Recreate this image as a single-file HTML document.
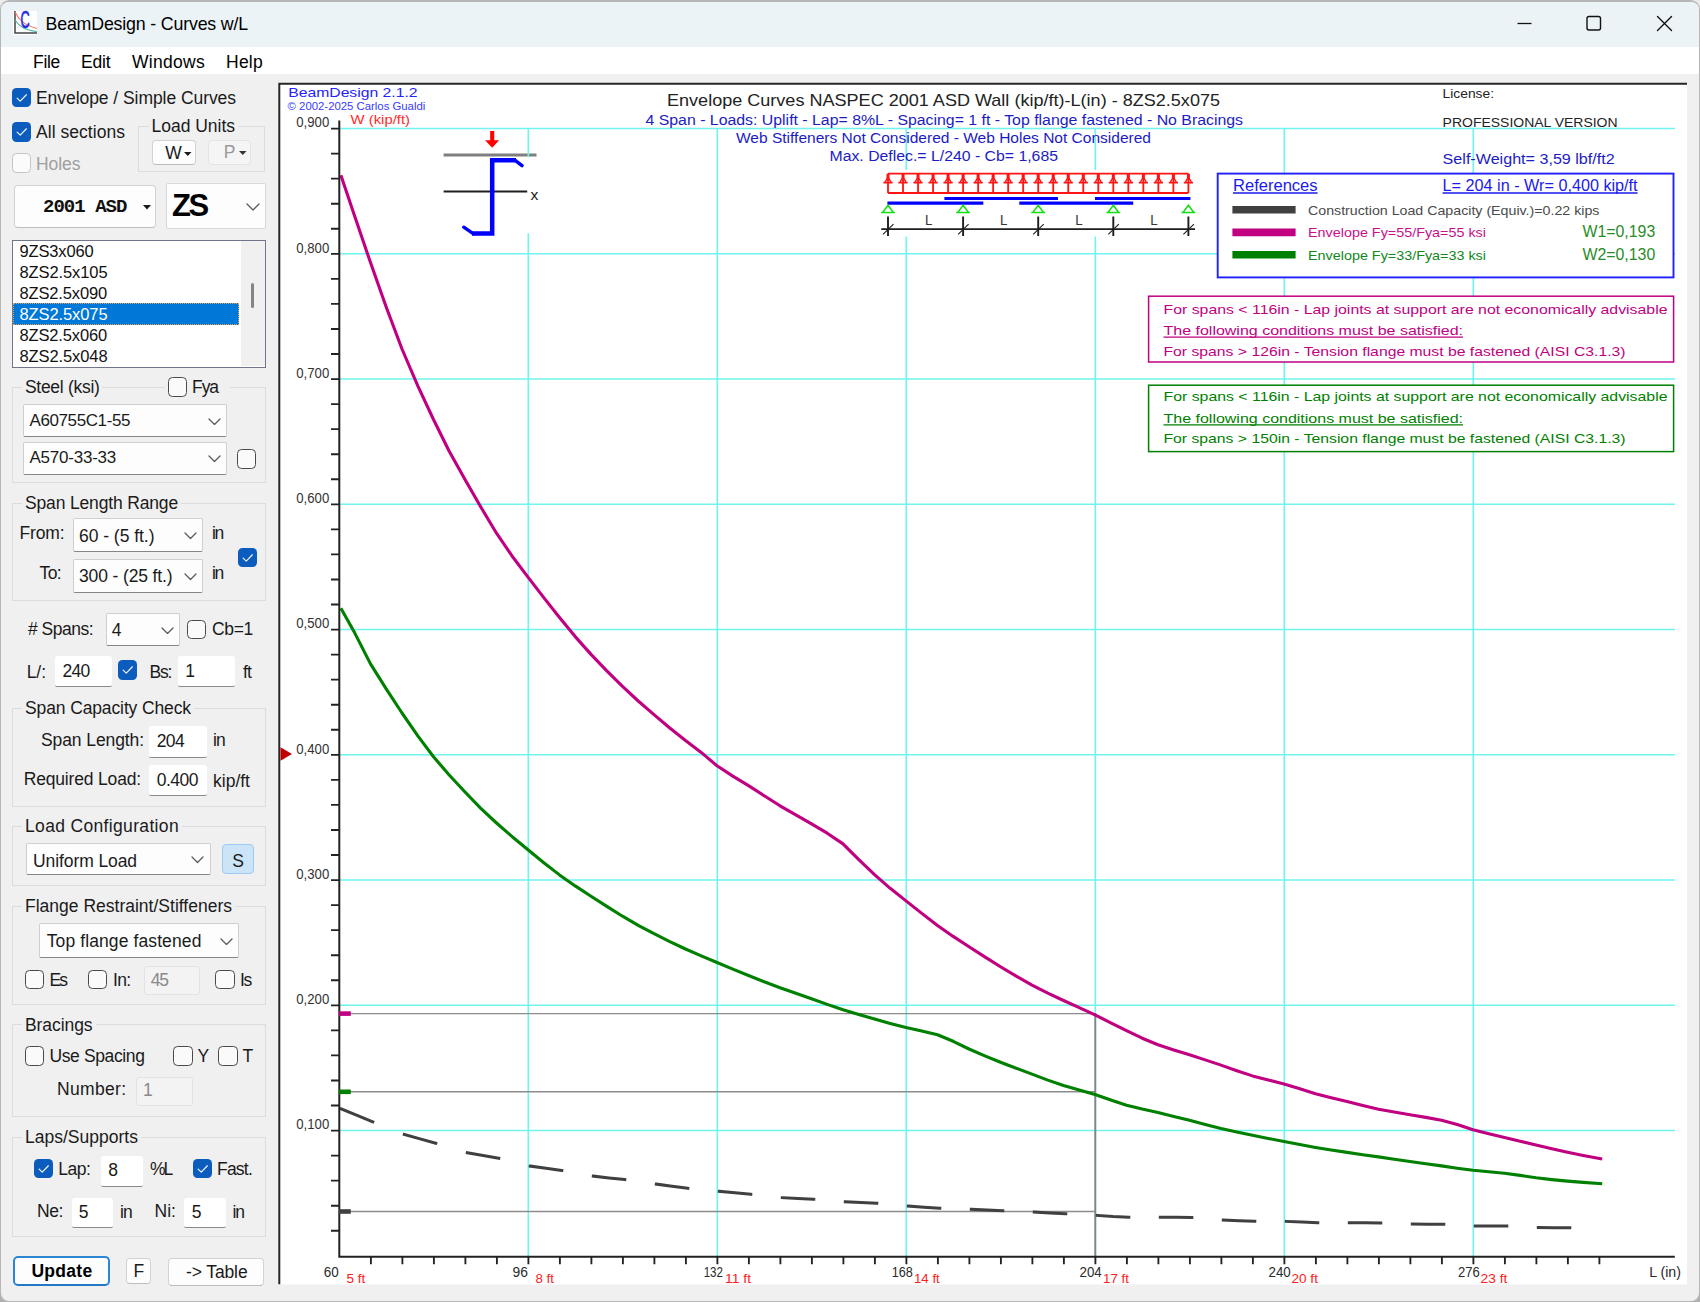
<!DOCTYPE html>
<html lang="en"><head><meta charset="utf-8"><title>BeamDesign - Curves w/L</title>
<style>
html,body{margin:0;padding:0;}
body{width:1700px;height:1302px;overflow:hidden;background:#ebebeb;font-family:"Liberation Sans",sans-serif;position:relative;}
#win{position:absolute;left:0;top:0;width:1700px;height:1302px;overflow:hidden;}
#frame{position:absolute;left:0;top:0;width:1700px;height:1302px;border-radius:9.5px;background:#b6b6b6;}
#winbg{left:1px;top:1.6px;width:1698px;height:1299.1px;background:#f0f0f0;border-radius:8px;overflow:hidden;}
#winbg > div{position:absolute;}
#win > div, #win > svg, #win > span{position:absolute;}
#titlebar{left:0;top:0;width:1700px;height:45px;background:#ecf3f6;}
#menubar{left:0;top:45px;width:1700px;height:27.8px;background:#fff;}
.t{position:absolute;white-space:pre;}
#chart{left:278px;top:82px;}
</style></head><body>
<div id="win">
<div style="position:absolute;left:0;top:1290px;width:1700px;height:12px;background:#b2b2b2"></div><div id="frame"></div>
<div id="winbg"><div id="titlebar"></div><div id="menubar"></div></div>
<svg id="appicon" style="left:12px;top:10px" width="26" height="26" viewBox="0 0 26 26">
<rect x="1" y="1" width="24" height="24" fill="#fff"/>
<path d="M3 1 V23 H25" fill="none" stroke="#444" stroke-width="1.5"/>
<path d="M3 2 C7 10 12 15 25 18.5" fill="none" stroke="#f07860" stroke-width="1.1"/>
<path d="M3 10 C7 16 12 20 25 21.5" fill="none" stroke="#50b8a0" stroke-width="1.1"/>
<text x="8.5" y="17.9" font-family="Liberation Sans, sans-serif" font-size="23" fill="#2a2ae0" stroke="#2a2ae0" stroke-width="0.7" textLength="9.2" lengthAdjust="spacingAndGlyphs">C</text>
</svg>
<svg id="winbtns" style="left:1500px;top:0" width="200" height="46" viewBox="0 0 200 46">
<path d="M17.5 23.5 H31.5" stroke="#111" stroke-width="1.3" fill="none"/>
<rect x="87" y="16.5" width="13.5" height="13.5" rx="2" fill="none" stroke="#111" stroke-width="1.4"/>
<path d="M157.5 16.5 L171.5 30.5 M171.5 16.5 L157.5 30.5" stroke="#111" stroke-width="1.4" fill="none" stroke-linecap="round"/>
</svg>
<div style="left:11.6px;top:87.6px;width:19.5px;height:19.5px;background:#0b5cbd;border-radius:4.5px;"><svg viewBox="0 0 19 19" width="100%" height="100%"><path d="M5 9.8 L8 12.8 L14 6.6" fill="none" stroke="#f2f6fc" stroke-width="1.15" stroke-linecap="round" stroke-linejoin="round"/></svg></div>
<div style="left:11.6px;top:122.1px;width:19.5px;height:19.5px;background:#0b5cbd;border-radius:4.5px;"><svg viewBox="0 0 19 19" width="100%" height="100%"><path d="M5 9.8 L8 12.8 L14 6.6" fill="none" stroke="#f2f6fc" stroke-width="1.15" stroke-linecap="round" stroke-linejoin="round"/></svg></div>
<div style="left:11.6px;top:153.3px;width:19.5px;height:19.5px;background:#fbfbfb;border:1.3px solid #c4c4c4;border-radius:4.5px;box-sizing:border-box;"></div>
<div style="left:138px;top:126px;width:126.5px;height:46px;border:1px solid #dcdcdc;box-sizing:border-box;"></div>
<div style="left:149px;top:118px;width:89px;height:16px;background:#f0f0f0;"></div>
<div style="left:151.5px;top:140px;width:44.5px;height:24.5px;background:#fdfdfd;border:1px solid #d2d2d2;border-bottom-color:#bdbdbd;box-sizing:border-box;border-radius:4px;"></div>
<svg style="left:184.25px;top:151.5px" width="7.5" height="4" viewBox="0 0 7.5 4"><path d="M0 0 L7.5 0 L3.75 4 Z" fill="#1a1a1a"/></svg>
<div style="left:207.5px;top:140px;width:43.5px;height:24.5px;background:#fdfdfd;border:1px solid #d2d2d2;border-bottom-color:#bdbdbd;box-sizing:border-box;border-radius:4px;background:#f5f5f5;border-color:#e4e4e4;"></div>
<svg style="left:239.25px;top:150.5px" width="7.5" height="4" viewBox="0 0 7.5 4"><path d="M0 0 L7.5 0 L3.75 4 Z" fill="#333"/></svg>
<div style="left:13.7px;top:185px;width:142.3px;height:42.5px;background:#fdfdfd;border:1px solid #d2d2d2;border-bottom-color:#bdbdbd;box-sizing:border-box;border-radius:4px;"></div>
<svg style="left:143px;top:205.25px" width="8" height="4.5" viewBox="0 0 8 4.5"><path d="M0 0 L8 0 L4 4.5 Z" fill="#1a1a1a"/></svg>
<div style="left:166px;top:183px;width:100px;height:46px;background:#fdfdfd;border:1px solid #d9d9d9;box-sizing:border-box;border-radius:2px;"></div>
<svg style="left:246px;top:203px" width="14" height="8" viewBox="-1 -1 14 8"><path d="M0 0 L6 6 L12 0" fill="none" stroke="#5a5a5a" stroke-width="1.3" stroke-linecap="round" stroke-linejoin="round"/></svg>
<div style="left:12px;top:239.6px;width:254px;height:128px;background:#fff;border:1.7px solid #70758a;box-sizing:border-box;"></div>
<div style="left:240.5px;top:241px;width:24px;height:124.5px;background:#f0f0f0;"></div>
<div style="left:251.3px;top:282.5px;width:3px;height:25px;background:#858585;border-radius:1.5px;"></div>
<div style="left:13.2px;top:303.3px;width:226.3px;height:21.6px;background:#0078d7;outline:1px dotted #e0a060;outline-offset:-1px;"></div>
<div style="left:12px;top:387px;width:253.7px;height:95.5px;border:1px solid #dcdcdc;box-sizing:border-box;"></div>
<div style="left:22px;top:379px;width:80px;height:16px;background:#f0f0f0;"></div>
<div style="left:165px;top:379px;width:65px;height:16px;background:#f0f0f0;"></div>
<div style="left:167.6px;top:377.1px;width:19.5px;height:19.5px;background:#fafafa;border:1.4px solid #4a4a4a;border-radius:4.5px;box-sizing:border-box;"></div>
<div style="left:23.1px;top:404px;width:204.4px;height:32.7px;background:#fdfdfd;border:1px solid #cfcfcf;border-bottom:1.4px solid #868686;box-sizing:border-box;border-radius:2px;"></div>
<svg style="left:207.5px;top:417.5px" width="13" height="7.5" viewBox="-1 -1 13 7.5"><path d="M0 0 L5.5 5.5 L11 0" fill="none" stroke="#5a5a5a" stroke-width="1.3" stroke-linecap="round" stroke-linejoin="round"/></svg>
<div style="left:23.1px;top:441.5px;width:204.4px;height:33.2px;background:#fdfdfd;border:1px solid #cfcfcf;border-bottom:1.4px solid #868686;box-sizing:border-box;border-radius:2px;"></div>
<svg style="left:207.5px;top:455.25px" width="13" height="7.5" viewBox="-1 -1 13 7.5"><path d="M0 0 L5.5 5.5 L11 0" fill="none" stroke="#5a5a5a" stroke-width="1.3" stroke-linecap="round" stroke-linejoin="round"/></svg>
<div style="left:236.6px;top:449.1px;width:19.5px;height:19.5px;background:#fafafa;border:1.4px solid #4a4a4a;border-radius:4.5px;box-sizing:border-box;"></div>
<div style="left:12px;top:502.5px;width:253.7px;height:98.5px;border:1px solid #dcdcdc;box-sizing:border-box;"></div>
<div style="left:22px;top:494.5px;width:159px;height:16px;background:#f0f0f0;"></div>
<div style="left:73.1px;top:518.2px;width:130.4px;height:34.2px;background:#fdfdfd;border:1px solid #cfcfcf;border-bottom:1.4px solid #868686;box-sizing:border-box;border-radius:2px;"></div>
<svg style="left:183.5px;top:532.45px" width="13" height="7.5" viewBox="-1 -1 13 7.5"><path d="M0 0 L5.5 5.5 L11 0" fill="none" stroke="#5a5a5a" stroke-width="1.3" stroke-linecap="round" stroke-linejoin="round"/></svg>
<div style="left:73.1px;top:559px;width:130.4px;height:34.2px;background:#fdfdfd;border:1px solid #cfcfcf;border-bottom:1.4px solid #868686;box-sizing:border-box;border-radius:2px;"></div>
<svg style="left:183.5px;top:573.25px" width="13" height="7.5" viewBox="-1 -1 13 7.5"><path d="M0 0 L5.5 5.5 L11 0" fill="none" stroke="#5a5a5a" stroke-width="1.3" stroke-linecap="round" stroke-linejoin="round"/></svg>
<div style="left:237.6px;top:547.6px;width:19.5px;height:19.5px;background:#0b5cbd;border-radius:4.5px;"><svg viewBox="0 0 19 19" width="100%" height="100%"><path d="M5 9.8 L8 12.8 L14 6.6" fill="none" stroke="#f2f6fc" stroke-width="1.15" stroke-linecap="round" stroke-linejoin="round"/></svg></div>
<div style="left:106.4px;top:613.2px;width:73.6px;height:33.2px;background:#fdfdfd;border:1px solid #cfcfcf;border-bottom:1.4px solid #868686;box-sizing:border-box;border-radius:2px;"></div>
<svg style="left:160.5px;top:626.95px" width="13" height="7.5" viewBox="-1 -1 13 7.5"><path d="M0 0 L5.5 5.5 L11 0" fill="none" stroke="#5a5a5a" stroke-width="1.3" stroke-linecap="round" stroke-linejoin="round"/></svg>
<div style="left:186.6px;top:619.6px;width:19.5px;height:19.5px;background:#fafafa;border:1.4px solid #4a4a4a;border-radius:4.5px;box-sizing:border-box;"></div>
<div style="left:55px;top:656px;width:56.7px;height:31px;background:#fff;border-bottom:1.5px solid #8a8a8a;box-sizing:border-box;border-radius:3px 3px 2px 2px;"></div>
<div style="left:117.6px;top:660.3px;width:19.5px;height:19.5px;background:#0b5cbd;border-radius:4.5px;"><svg viewBox="0 0 19 19" width="100%" height="100%"><path d="M5 9.8 L8 12.8 L14 6.6" fill="none" stroke="#f2f6fc" stroke-width="1.15" stroke-linecap="round" stroke-linejoin="round"/></svg></div>
<div style="left:178px;top:656px;width:57px;height:31px;background:#fff;border-bottom:1.5px solid #8a8a8a;box-sizing:border-box;border-radius:3px 3px 2px 2px;"></div>
<div style="left:12px;top:708px;width:253.7px;height:99px;border:1px solid #dcdcdc;box-sizing:border-box;"></div>
<div style="left:22px;top:700px;width:172px;height:16px;background:#f0f0f0;"></div>
<div style="left:149px;top:726px;width:57.7px;height:31.5px;background:#fff;border-bottom:1.5px solid #8a8a8a;box-sizing:border-box;border-radius:3px 3px 2px 2px;"></div>
<div style="left:149px;top:765px;width:57.7px;height:31px;background:#fff;border-bottom:1.5px solid #8a8a8a;box-sizing:border-box;border-radius:3px 3px 2px 2px;"></div>
<div style="left:12px;top:826px;width:253.7px;height:60px;border:1px solid #dcdcdc;box-sizing:border-box;"></div>
<div style="left:22px;top:818px;width:160px;height:16px;background:#f0f0f0;"></div>
<div style="left:26.1px;top:843.2px;width:185.1px;height:32px;background:#fdfdfd;border:1px solid #cfcfcf;border-bottom:1.4px solid #868686;box-sizing:border-box;border-radius:2px;"></div>
<svg style="left:190.5px;top:856.35px" width="13" height="7.5" viewBox="-1 -1 13 7.5"><path d="M0 0 L5.5 5.5 L11 0" fill="none" stroke="#5a5a5a" stroke-width="1.3" stroke-linecap="round" stroke-linejoin="round"/></svg>
<div style="left:221.7px;top:843.7px;width:32.3px;height:30.3px;background:#fdfdfd;border:1px solid #d2d2d2;border-bottom-color:#bdbdbd;box-sizing:border-box;border-radius:4px;background:#cce4f7;border:1px solid #9dcaf0;"></div>
<div style="left:12px;top:905.5px;width:253.7px;height:99.1px;border:1px solid #dcdcdc;box-sizing:border-box;"></div>
<div style="left:22px;top:897.5px;width:213px;height:16px;background:#f0f0f0;"></div>
<div style="left:39.4px;top:923.2px;width:200.1px;height:34.5px;background:#fdfdfd;border:1px solid #cfcfcf;border-bottom:1.4px solid #868686;box-sizing:border-box;border-radius:2px;"></div>
<svg style="left:219.5px;top:937.6px" width="13" height="7.5" viewBox="-1 -1 13 7.5"><path d="M0 0 L5.5 5.5 L11 0" fill="none" stroke="#5a5a5a" stroke-width="1.3" stroke-linecap="round" stroke-linejoin="round"/></svg>
<div style="left:24.6px;top:969.5px;width:19.5px;height:19.5px;background:#fafafa;border:1.4px solid #4a4a4a;border-radius:4.5px;box-sizing:border-box;"></div>
<div style="left:87.6px;top:969.5px;width:19.5px;height:19.5px;background:#fafafa;border:1.4px solid #4a4a4a;border-radius:4.5px;box-sizing:border-box;"></div>
<div style="left:143.7px;top:965.5px;width:56.3px;height:29.5px;background:#f3f3f3;border:1px solid #e2e2e2;box-sizing:border-box;border-radius:3px;"></div>
<div style="left:215.1px;top:969.5px;width:19.5px;height:19.5px;background:#fafafa;border:1.4px solid #4a4a4a;border-radius:4.5px;box-sizing:border-box;"></div>
<div style="left:12px;top:1024px;width:253.7px;height:93px;border:1px solid #dcdcdc;box-sizing:border-box;"></div>
<div style="left:22px;top:1016px;width:74px;height:16px;background:#f0f0f0;"></div>
<div style="left:24.6px;top:1046.2px;width:19.5px;height:19.5px;background:#fafafa;border:1.4px solid #4a4a4a;border-radius:4.5px;box-sizing:border-box;"></div>
<div style="left:173px;top:1046.2px;width:19.5px;height:19.5px;background:#fafafa;border:1.4px solid #4a4a4a;border-radius:4.5px;box-sizing:border-box;"></div>
<div style="left:218.2px;top:1046.2px;width:19.5px;height:19.5px;background:#fafafa;border:1.4px solid #4a4a4a;border-radius:4.5px;box-sizing:border-box;"></div>
<div style="left:135.7px;top:1076.8px;width:57.8px;height:29.2px;background:#f3f3f3;border:1px solid #e2e2e2;box-sizing:border-box;border-radius:3px;"></div>
<div style="left:12px;top:1137px;width:253.7px;height:100px;border:1px solid #dcdcdc;box-sizing:border-box;"></div>
<div style="left:22px;top:1129px;width:119px;height:16px;background:#f0f0f0;"></div>
<div style="left:33.6px;top:1158.6px;width:19.5px;height:19.5px;background:#0b5cbd;border-radius:4.5px;"><svg viewBox="0 0 19 19" width="100%" height="100%"><path d="M5 9.8 L8 12.8 L14 6.6" fill="none" stroke="#f2f6fc" stroke-width="1.15" stroke-linecap="round" stroke-linejoin="round"/></svg></div>
<div style="left:101px;top:1155.8px;width:41.7px;height:30.8px;background:#fff;border-bottom:1.5px solid #8a8a8a;box-sizing:border-box;border-radius:3px 3px 2px 2px;"></div>
<div style="left:192.6px;top:1158.6px;width:19.5px;height:19.5px;background:#0b5cbd;border-radius:4.5px;"><svg viewBox="0 0 19 19" width="100%" height="100%"><path d="M5 9.8 L8 12.8 L14 6.6" fill="none" stroke="#f2f6fc" stroke-width="1.15" stroke-linecap="round" stroke-linejoin="round"/></svg></div>
<div style="left:71.6px;top:1197.8px;width:41.4px;height:30.6px;background:#fff;border-bottom:1.5px solid #8a8a8a;box-sizing:border-box;border-radius:3px 3px 2px 2px;"></div>
<div style="left:184px;top:1197.8px;width:41.6px;height:30.6px;background:#fff;border-bottom:1.5px solid #8a8a8a;box-sizing:border-box;border-radius:3px 3px 2px 2px;"></div>
<div style="left:13px;top:1256.4px;width:97px;height:29.6px;background:#fdfdfd;border:2px solid #2d86d4;border-bottom-color:#2378c6;box-sizing:border-box;border-radius:5px;"></div>
<div style="left:126.4px;top:1258.4px;width:25.1px;height:25.2px;background:#fdfdfd;border:1px solid #d2d2d2;border-bottom-color:#bdbdbd;box-sizing:border-box;border-radius:4px;"></div>
<div style="left:168.3px;top:1258.4px;width:96px;height:27.9px;background:#fdfdfd;border:1px solid #d2d2d2;border-bottom-color:#bdbdbd;box-sizing:border-box;border-radius:4px;"></div>
<span class="t" style="left:45.50px;top:15.93px;font-size:17.8px;line-height:17.8px;letter-spacing:-0.176px;color:#000;">BeamDesign - Curves w/L</span>
<span class="t" style="left:33.00px;top:53.99px;font-size:17.5px;line-height:17.5px;letter-spacing:-0.301px;color:#000;">File</span>
<span class="t" style="left:81.00px;top:53.99px;font-size:17.5px;line-height:17.5px;letter-spacing:-0.164px;color:#000;">Edit</span>
<span class="t" style="left:132.00px;top:53.99px;font-size:17.5px;line-height:17.5px;letter-spacing:0.286px;color:#000;">Windows</span>
<span class="t" style="left:226.00px;top:53.99px;font-size:17.5px;line-height:17.5px;letter-spacing:0.250px;color:#000;">Help</span>
<span class="t" style="left:36.00px;top:89.69px;font-size:17.5px;line-height:17.5px;letter-spacing:-0.057px;color:#1a1a1a;">Envelope / Simple Curves</span>
<span class="t" style="left:36.00px;top:123.99px;font-size:17.5px;line-height:17.5px;letter-spacing:0.040px;color:#1a1a1a;">All sections</span>
<span class="t" style="left:36.00px;top:155.99px;font-size:17.5px;line-height:17.5px;letter-spacing:-0.050px;color:#a0a0a0;">Holes</span>
<span class="t" style="left:151.50px;top:117.99px;font-size:17.5px;line-height:17.5px;letter-spacing:-0.017px;color:#1a1a1a;">Load Units</span>
<span class="t" style="left:165.23px;top:144.99px;font-size:17.5px;line-height:17.5px;letter-spacing:0.000px;color:#1a1a1a;">W</span>
<span class="t" style="left:223.66px;top:143.99px;font-size:17.5px;line-height:17.5px;letter-spacing:0.000px;color:#9a9a9a;">P</span>
<span class="t" style="left:43.00px;top:197.84px;font-size:19px;line-height:19px;letter-spacing:-0.965px;color:#111;font-weight:bold;font-family:'Liberation Mono',monospace;">2001 ASD</span>
<span class="t" style="left:172.00px;top:190.16px;font-size:31px;line-height:31px;letter-spacing:-2.312px;color:#000;font-weight:bold;">ZS</span>
<span class="t" style="left:19.50px;top:242.73px;font-size:16.5px;line-height:16.5px;letter-spacing:-0.152px;color:#111;">9ZS3x060</span>
<span class="t" style="left:19.50px;top:263.73px;font-size:16.5px;line-height:16.5px;letter-spacing:-0.098px;color:#111;">8ZS2.5x105</span>
<span class="t" style="left:19.50px;top:284.73px;font-size:16.5px;line-height:16.5px;letter-spacing:-0.148px;color:#111;">8ZS2.5x090</span>
<span class="t" style="left:19.50px;top:305.73px;font-size:16.5px;line-height:16.5px;letter-spacing:-0.098px;color:#fff;">8ZS2.5x075</span>
<span class="t" style="left:19.50px;top:326.73px;font-size:16.5px;line-height:16.5px;letter-spacing:-0.148px;color:#111;">8ZS2.5x060</span>
<span class="t" style="left:19.50px;top:347.73px;font-size:16.5px;line-height:16.5px;letter-spacing:-0.098px;color:#111;">8ZS2.5x048</span>
<span class="t" style="left:25.00px;top:378.99px;font-size:17.5px;line-height:17.5px;letter-spacing:-0.300px;color:#1a1a1a;">Steel (ksi)</span>
<span class="t" style="left:192.00px;top:378.99px;font-size:17.5px;line-height:17.5px;letter-spacing:-1.062px;color:#1a1a1a;">Fya</span>
<span class="t" style="left:29.50px;top:412.41px;font-size:17px;line-height:17px;letter-spacing:-0.402px;color:#1a1a1a;">A60755C1-55</span>
<span class="t" style="left:29.50px;top:449.41px;font-size:17px;line-height:17px;letter-spacing:-0.234px;color:#1a1a1a;">A570-33-33</span>
<span class="t" style="left:25.00px;top:494.99px;font-size:17.5px;line-height:17.5px;letter-spacing:-0.159px;color:#1a1a1a;">Span Length Range</span>
<span class="t" style="left:19.50px;top:524.99px;font-size:17.5px;line-height:17.5px;letter-spacing:-0.141px;color:#1a1a1a;">From:</span>
<span class="t" style="left:79.00px;top:527.79px;font-size:17.5px;line-height:17.5px;letter-spacing:-0.030px;color:#1a1a1a;">60 - (5 ft.)</span>
<span class="t" style="left:212.00px;top:524.99px;font-size:17.5px;line-height:17.5px;letter-spacing:-1.312px;color:#1a1a1a;">in</span>
<span class="t" style="left:39.50px;top:564.99px;font-size:17.5px;line-height:17.5px;letter-spacing:-0.620px;color:#1a1a1a;">To:</span>
<span class="t" style="left:79.00px;top:567.99px;font-size:17.5px;line-height:17.5px;letter-spacing:-0.131px;color:#1a1a1a;">300 - (25 ft.)</span>
<span class="t" style="left:212.00px;top:564.99px;font-size:17.5px;line-height:17.5px;letter-spacing:-1.312px;color:#1a1a1a;">in</span>
<span class="t" style="left:28.00px;top:620.99px;font-size:17.5px;line-height:17.5px;letter-spacing:-0.510px;color:#1a1a1a;"># Spans:</span>
<span class="t" style="left:111.63px;top:621.99px;font-size:17.5px;line-height:17.5px;letter-spacing:0.000px;color:#1a1a1a;">4</span>
<span class="t" style="left:212.00px;top:620.99px;font-size:17.5px;line-height:17.5px;letter-spacing:-0.332px;color:#1a1a1a;">Cb=1</span>
<span class="t" style="left:26.70px;top:663.99px;font-size:17.5px;line-height:17.5px;letter-spacing:-0.056px;color:#1a1a1a;">L/:</span>
<span class="t" style="left:62.50px;top:662.79px;font-size:17.5px;line-height:17.5px;letter-spacing:-0.734px;color:#1a1a1a;">240</span>
<span class="t" style="left:149.50px;top:663.99px;font-size:17.5px;line-height:17.5px;letter-spacing:-1.266px;color:#1a1a1a;">Bs:</span>
<span class="t" style="left:185.13px;top:662.79px;font-size:17.5px;line-height:17.5px;letter-spacing:0.000px;color:#1a1a1a;">1</span>
<span class="t" style="left:243.00px;top:663.99px;font-size:17.5px;line-height:17.5px;letter-spacing:-0.867px;color:#1a1a1a;">ft</span>
<span class="t" style="left:25.00px;top:699.99px;font-size:17.5px;line-height:17.5px;letter-spacing:-0.121px;color:#1a1a1a;">Span Capacity Check</span>
<span class="t" style="left:41.00px;top:731.69px;font-size:17.5px;line-height:17.5px;letter-spacing:-0.094px;color:#1a1a1a;">Span Length:</span>
<span class="t" style="left:156.70px;top:732.99px;font-size:17.5px;line-height:17.5px;letter-spacing:-0.634px;color:#1a1a1a;">204</span>
<span class="t" style="left:213.00px;top:731.99px;font-size:17.5px;line-height:17.5px;letter-spacing:-0.812px;color:#1a1a1a;">in</span>
<span class="t" style="left:23.70px;top:770.99px;font-size:17.5px;line-height:17.5px;letter-spacing:-0.169px;color:#1a1a1a;">Required Load:</span>
<span class="t" style="left:156.70px;top:771.99px;font-size:17.5px;line-height:17.5px;letter-spacing:-0.499px;color:#1a1a1a;">0.400</span>
<span class="t" style="left:213.00px;top:772.99px;font-size:17.5px;line-height:17.5px;letter-spacing:0.005px;color:#1a1a1a;">kip/ft</span>
<span class="t" style="left:25.00px;top:818.49px;font-size:17.5px;line-height:17.5px;letter-spacing:0.339px;color:#1a1a1a;">Load Configuration</span>
<span class="t" style="left:33.00px;top:852.59px;font-size:17.5px;line-height:17.5px;letter-spacing:-0.089px;color:#1a1a1a;">Uniform Load</span>
<span class="t" style="left:232.16px;top:852.59px;font-size:17.5px;line-height:17.5px;letter-spacing:0.000px;color:#1a1a1a;">S</span>
<span class="t" style="left:25.00px;top:897.99px;font-size:17.5px;line-height:17.5px;letter-spacing:0.005px;color:#1a1a1a;">Flange Restraint/Stiffeners</span>
<span class="t" style="left:46.70px;top:932.79px;font-size:17.5px;line-height:17.5px;letter-spacing:0.107px;color:#1a1a1a;">Top flange fastened</span>
<span class="t" style="left:49.50px;top:972.39px;font-size:17.5px;line-height:17.5px;letter-spacing:-1.969px;color:#1a1a1a;">Es</span>
<span class="t" style="left:113.00px;top:972.39px;font-size:17.5px;line-height:17.5px;letter-spacing:-0.623px;color:#1a1a1a;">In:</span>
<span class="t" style="left:150.70px;top:971.89px;font-size:17.5px;line-height:17.5px;letter-spacing:-1.084px;color:#8a8a8a;">45</span>
<span class="t" style="left:240.00px;top:972.39px;font-size:17.5px;line-height:17.5px;letter-spacing:-1.312px;color:#1a1a1a;">Is</span>
<span class="t" style="left:25.00px;top:1016.79px;font-size:17.5px;line-height:17.5px;letter-spacing:-0.074px;color:#1a1a1a;">Bracings</span>
<span class="t" style="left:49.50px;top:1048.39px;font-size:17.5px;line-height:17.5px;letter-spacing:-0.385px;color:#1a1a1a;">Use Spacing</span>
<span class="t" style="left:197.41px;top:1048.39px;font-size:17.5px;line-height:17.5px;letter-spacing:0.000px;color:#1a1a1a;">Y</span>
<span class="t" style="left:242.40px;top:1048.39px;font-size:17.5px;line-height:17.5px;letter-spacing:0.000px;color:#1a1a1a;">T</span>
<span class="t" style="left:57.00px;top:1080.99px;font-size:17.5px;line-height:17.5px;letter-spacing:0.327px;color:#1a1a1a;">Number:</span>
<span class="t" style="left:142.88px;top:1081.99px;font-size:17.5px;line-height:17.5px;letter-spacing:0.000px;color:#8a8a8a;">1</span>
<span class="t" style="left:25.00px;top:1128.79px;font-size:17.5px;line-height:17.5px;letter-spacing:0.011px;color:#1a1a1a;">Laps/Supports</span>
<span class="t" style="left:58.30px;top:1160.69px;font-size:17.5px;line-height:17.5px;letter-spacing:-0.466px;color:#1a1a1a;">Lap:</span>
<span class="t" style="left:108.13px;top:1162.19px;font-size:17.5px;line-height:17.5px;letter-spacing:0.000px;color:#1a1a1a;">8</span>
<span class="t" style="left:150.00px;top:1160.99px;font-size:17.5px;line-height:17.5px;letter-spacing:-2.148px;color:#1a1a1a;">%L</span>
<span class="t" style="left:217.00px;top:1160.69px;font-size:17.5px;line-height:17.5px;letter-spacing:-0.781px;color:#1a1a1a;">Fast.</span>
<span class="t" style="left:37.00px;top:1202.69px;font-size:17.5px;line-height:17.5px;letter-spacing:-0.411px;color:#1a1a1a;">Ne:</span>
<span class="t" style="left:78.63px;top:1204.19px;font-size:17.5px;line-height:17.5px;letter-spacing:0.000px;color:#1a1a1a;">5</span>
<span class="t" style="left:120.00px;top:1203.99px;font-size:17.5px;line-height:17.5px;letter-spacing:-0.812px;color:#1a1a1a;">in</span>
<span class="t" style="left:154.50px;top:1202.69px;font-size:17.5px;line-height:17.5px;letter-spacing:0.036px;color:#1a1a1a;">Ni:</span>
<span class="t" style="left:191.63px;top:1204.19px;font-size:17.5px;line-height:17.5px;letter-spacing:0.000px;color:#1a1a1a;">5</span>
<span class="t" style="left:232.40px;top:1203.99px;font-size:17.5px;line-height:17.5px;letter-spacing:-1.013px;color:#1a1a1a;">in</span>
<span class="t" style="left:31.40px;top:1262.79px;font-size:17.5px;line-height:17.5px;letter-spacing:0.298px;color:#000;font-weight:bold;">Update</span>
<span class="t" style="left:133.40px;top:1262.59px;font-size:17.5px;line-height:17.5px;letter-spacing:0.000px;color:#1a1a1a;">F</span>
<span class="t" style="left:186.00px;top:1264.39px;font-size:17.5px;line-height:17.5px;letter-spacing:-0.117px;color:#1a1a1a;">-&gt; Table</span>
<svg id="chart" width="1412" height="1210" viewBox="278 82 1412 1210" font-family="Liberation Sans, sans-serif">
<rect x="278.3" y="82.8" width="1408.7" height="1201.6" fill="#fff"/>
<path d="M279.3 1284.3 V83.8 H1687" fill="none" stroke="#262626" stroke-width="2"/>
<path d="M443.6 155 H536.5" stroke="#7f7f7f" stroke-width="3.2" fill="none"/>
<path d="M340 1130.55 H1675 M340 1005.30 H1675 M340 880.05 H1675 M340 754.80 H1675 M340 629.55 H1675 M340 504.30 H1675 M340 379.05 H1675 M340 253.80 H1675 M340 128.55 H1675 M528.30 128.6 V1256 M717.30 128.6 V1256 M906.30 128.6 V1256 M1095.30 128.6 V1256 M1284.30 128.6 V1256 M1473.30 128.6 V1256" fill="none" stroke="#6ff4ee" stroke-width="1.6"/>
<rect x="438" y="157.3" width="108" height="76" fill="#fff"/>
<rect x="878" y="170" width="320" height="66.5" fill="#fff"/>
<path d="M350 1013.6 H1095.3 M350 1091.8 H1095.3 M350 1211.5 H1095.3" fill="none" stroke="#8c8c8c" stroke-width="1.4"/>
<path d="M1095.3 1013 V1256" fill="none" stroke="#858585" stroke-width="1.9"/>
<clipPath id="cc"><rect x="339.8" y="100" width="1340" height="1157"/></clipPath><g clip-path="url(#cc)">
<polyline points="340.9,175.2 354.8,216.4 370.5,262.6 386.2,306.9 402.0,349.0 417.8,385.8 433.5,419.5 449.2,451.3 465.0,479.4 480.8,507.0 496.5,533.2 512.2,556.2 528.0,577.1 543.8,597.6 559.5,617.5 575.2,636.6 591.0,654.4 606.8,670.9 622.5,686.4 638.2,701.0 654.0,714.6 669.8,728.0 685.5,740.5 701.2,752.4 717.0,765.8 732.8,776.1 748.5,785.6 764.2,795.7 780.0,805.8 795.8,814.9 811.5,823.8 827.2,833.2 843.0,843.9 858.8,859.6 874.5,874.6 890.2,888.3 906.0,900.9 921.8,913.4 937.5,925.4 953.2,936.4 969.0,946.7 984.8,956.9 1000.5,966.7 1016.2,976.2 1032.0,985.1 1047.8,993.1 1063.5,1000.5 1079.2,1007.7 1095.0,1014.9 1110.8,1022.8 1126.5,1030.7 1142.2,1038.2 1158.0,1044.8 1173.8,1049.9 1189.5,1054.7 1205.2,1059.9 1221.0,1065.1 1236.8,1070.7 1252.5,1075.9 1268.2,1079.9 1284.0,1083.9 1299.8,1088.8 1315.5,1093.7 1331.2,1097.7 1347.0,1101.4 1362.8,1105.4 1378.5,1109.2 1394.2,1112.1 1410.0,1114.7 1425.8,1117.4 1441.5,1120.2 1457.2,1124.5 1473.0,1129.7 1488.8,1133.7 1504.5,1137.5 1520.2,1141.2 1536.0,1144.9 1551.8,1148.7 1567.5,1152.2 1583.2,1155.5 1602.2,1159.1" fill="none" stroke="#c00080" stroke-width="3.1" stroke-linejoin="round" stroke-linecap="butt"/>
<polyline points="340.9,608.3 354.8,633.1 370.5,663.9 386.2,688.9 402.0,713.0 417.8,735.9 433.5,756.8 449.2,775.0 465.0,792.0 480.8,808.3 496.5,823.0 512.2,836.7 528.0,849.8 543.8,862.7 559.5,874.9 575.2,885.9 591.0,896.2 606.8,906.4 622.5,916.2 638.2,925.3 654.0,933.7 669.8,941.6 685.5,949.0 701.2,955.9 717.0,962.5 732.8,969.1 748.5,975.5 764.2,981.8 780.0,987.7 795.8,993.3 811.5,998.8 827.2,1004.4 843.0,1009.7 858.8,1014.6 874.5,1019.1 890.2,1023.4 906.0,1027.5 921.8,1030.9 937.5,1034.7 953.2,1041.3 969.0,1049.0 984.8,1055.8 1000.5,1062.2 1016.2,1068.2 1032.0,1074.1 1047.8,1080.1 1063.5,1085.5 1079.2,1090.0 1095.0,1094.5 1110.8,1100.0 1126.5,1105.2 1142.2,1109.1 1158.0,1112.6 1173.8,1116.4 1189.5,1120.3 1205.2,1124.4 1221.0,1128.5 1236.8,1132.0 1252.5,1135.2 1268.2,1138.4 1284.0,1141.5 1299.8,1144.5 1315.5,1147.4 1331.2,1150.0 1347.0,1152.4 1362.8,1154.7 1378.5,1156.9 1394.2,1159.2 1410.0,1161.5 1425.8,1163.7 1441.5,1165.9 1457.2,1168.2 1473.0,1170.3 1488.8,1171.8 1504.5,1173.2 1520.2,1175.4 1536.0,1177.8 1551.8,1179.6 1567.5,1181.1 1583.2,1182.4 1602.2,1183.8" fill="none" stroke="#008000" stroke-width="3.1" stroke-linejoin="round" stroke-linecap="butt"/>
<path d="M341.3 1109.0 L357.1 1115.4 L372.8 1121.8 M404.3 1134.4 L420.1 1138.9 L435.8 1143.2 M467.3 1152.7 L483.1 1155.5 L498.8 1158.2 M530.3 1166.1 L546.0 1168.3 L561.8 1170.4 M593.3 1176.1 L609.0 1177.9 L624.8 1179.6 M656.3 1184.1 L672.0 1186.3 L687.8 1188.3 M719.3 1191.3 L735.0 1192.8 L750.8 1194.3 M782.3 1197.7 L798.0 1198.5 L813.8 1199.3 M845.3 1201.8 L861.0 1202.5 L876.8 1203.2 M908.3 1206.1 L924.0 1207.3 L939.8 1208.2 M971.3 1209.3 L987.0 1210.0 L1002.8 1210.7 M1034.3 1212.1 L1050.0 1213.0 L1065.8 1213.8 M1097.3 1215.4 L1113.0 1216.5 L1128.8 1217.2 M1160.3 1217.2 L1176.0 1217.3 L1191.8 1217.4 M1223.3 1220.0 L1239.0 1220.8 L1254.8 1221.3 M1286.3 1221.4 L1302.0 1222.1 L1317.8 1222.7 M1349.3 1222.7 L1365.0 1222.8 L1380.8 1222.9 M1412.3 1224.1 L1428.0 1224.2 L1443.8 1224.3 M1475.3 1225.9 L1491.0 1226.0 L1506.8 1226.0 M1538.3 1227.6 L1554.0 1227.7 L1569.8 1227.7" fill="none" stroke="#404040" stroke-width="3" stroke-linecap="square"/>
</g>
<path d="M331 1230.75 H339.5 M331 1205.70 H339.5 M331 1180.65 H339.5 M331 1155.60 H339.5 M331 1130.55 H339.5 M331 1105.50 H339.5 M331 1080.45 H339.5 M331 1055.40 H339.5 M331 1030.35 H339.5 M331 1005.30 H339.5 M331 980.25 H339.5 M331 955.20 H339.5 M331 930.15 H339.5 M331 905.10 H339.5 M331 880.05 H339.5 M331 855.00 H339.5 M331 829.95 H339.5 M331 804.90 H339.5 M331 779.85 H339.5 M331 754.80 H339.5 M331 729.75 H339.5 M331 704.70 H339.5 M331 679.65 H339.5 M331 654.60 H339.5 M331 629.55 H339.5 M331 604.50 H339.5 M331 579.45 H339.5 M331 554.40 H339.5 M331 529.35 H339.5 M331 504.30 H339.5 M331 479.25 H339.5 M331 454.20 H339.5 M331 429.15 H339.5 M331 404.10 H339.5 M331 379.05 H339.5 M331 354.00 H339.5 M331 328.95 H339.5 M331 303.90 H339.5 M331 278.85 H339.5 M331 253.80 H339.5 M331 228.75 H339.5 M331 203.70 H339.5 M331 178.65 H339.5 M331 153.60 H339.5 M331 128.55 H339.5 M370.90 1256.5 V1264.3 M402.40 1256.5 V1264.3 M433.90 1256.5 V1264.3 M465.40 1256.5 V1264.3 M496.90 1256.5 V1264.3 M528.40 1256.5 V1264.3 M559.90 1256.5 V1264.3 M591.40 1256.5 V1264.3 M622.90 1256.5 V1264.3 M654.40 1256.5 V1264.3 M685.90 1256.5 V1264.3 M717.40 1256.5 V1264.3 M748.90 1256.5 V1264.3 M780.40 1256.5 V1264.3 M811.90 1256.5 V1264.3 M843.40 1256.5 V1264.3 M874.90 1256.5 V1264.3 M906.40 1256.5 V1264.3 M937.90 1256.5 V1264.3 M969.40 1256.5 V1264.3 M1000.90 1256.5 V1264.3 M1032.40 1256.5 V1264.3 M1063.90 1256.5 V1264.3 M1095.40 1256.5 V1264.3 M1126.90 1256.5 V1264.3 M1158.40 1256.5 V1264.3 M1189.90 1256.5 V1264.3 M1221.40 1256.5 V1264.3 M1252.90 1256.5 V1264.3 M1284.40 1256.5 V1264.3 M1315.90 1256.5 V1264.3 M1347.40 1256.5 V1264.3 M1378.90 1256.5 V1264.3 M1410.40 1256.5 V1264.3 M1441.90 1256.5 V1264.3 M1473.40 1256.5 V1264.3 M1504.90 1256.5 V1264.3 M1536.40 1256.5 V1264.3 M1567.90 1256.5 V1264.3 M1599.40 1256.5 V1264.3" fill="none" stroke="#222" stroke-width="1.85"/>
<path d="M339.3 120.5 V1256.7 H1674.8" fill="none" stroke="#222" stroke-width="2"/>
<path d="M339 1013.6 H350.8" stroke="#c00080" stroke-width="4.6" fill="none"/>
<path d="M339 1091.8 H350.8" stroke="#008000" stroke-width="4.6" fill="none"/>
<path d="M339 1211.5 H350.8" stroke="#404040" stroke-width="4.6" fill="none"/>
<path d="M280.5 747.3 L292 754 L280.5 760.7 Z" fill="#c00000"/>
<text x="296.3" y="1129.2" font-size="13.8" fill="#333" textLength="32.9" lengthAdjust="spacingAndGlyphs">0,100</text>
<text x="296.3" y="1004.0" font-size="13.8" fill="#333" textLength="32.9" lengthAdjust="spacingAndGlyphs">0,200</text>
<text x="296.3" y="878.8" font-size="13.8" fill="#333" textLength="32.9" lengthAdjust="spacingAndGlyphs">0,300</text>
<text x="296.3" y="753.5" font-size="13.8" fill="#333" textLength="32.9" lengthAdjust="spacingAndGlyphs">0,400</text>
<text x="296.3" y="628.2" font-size="13.8" fill="#333" textLength="32.9" lengthAdjust="spacingAndGlyphs">0,500</text>
<text x="296.3" y="503.0" font-size="13.8" fill="#333" textLength="32.9" lengthAdjust="spacingAndGlyphs">0,600</text>
<text x="296.3" y="377.7" font-size="13.8" fill="#333" textLength="32.9" lengthAdjust="spacingAndGlyphs">0,700</text>
<text x="296.3" y="252.5" font-size="13.8" fill="#333" textLength="32.9" lengthAdjust="spacingAndGlyphs">0,800</text>
<text x="296.3" y="127.2" font-size="13.8" fill="#333" textLength="32.9" lengthAdjust="spacingAndGlyphs">0,900</text>
<text x="350.6" y="124.4" font-size="13.5" fill="#ff2a2a" textLength="59.4" lengthAdjust="spacingAndGlyphs">W (kip/ft)</text>
<text x="288.2" y="97.4" font-size="13.5" fill="#2222ff" textLength="129.4" lengthAdjust="spacingAndGlyphs">BeamDesign 2.1.2</text>
<text x="287.6" y="109.7" font-size="11.5" fill="#3a3aff" textLength="137.7" lengthAdjust="spacingAndGlyphs">© 2002-2025 Carlos Gualdi</text>
<text x="323.7" y="1277.0" font-size="14" fill="#2a2a2a" textLength="15.0" lengthAdjust="spacingAndGlyphs">60</text>
<text x="512.6" y="1277.0" font-size="14" fill="#2a2a2a" textLength="15.4" lengthAdjust="spacingAndGlyphs">96</text>
<text x="703.7" y="1277.0" font-size="14" fill="#2a2a2a" textLength="19.3" lengthAdjust="spacingAndGlyphs">132</text>
<text x="891.7" y="1277.0" font-size="14" fill="#2a2a2a" textLength="21.1" lengthAdjust="spacingAndGlyphs">168</text>
<text x="1079.5" y="1277.0" font-size="14" fill="#2a2a2a" textLength="22.2" lengthAdjust="spacingAndGlyphs">204</text>
<text x="1268.5" y="1277.0" font-size="14" fill="#2a2a2a" textLength="22.2" lengthAdjust="spacingAndGlyphs">240</text>
<text x="1457.9" y="1277.0" font-size="14" fill="#2a2a2a" textLength="21.8" lengthAdjust="spacingAndGlyphs">276</text>
<text x="346.4" y="1282.5" font-size="12.5" fill="#ff2020" textLength="18.9" lengthAdjust="spacingAndGlyphs">5 ft</text>
<text x="535.4" y="1282.5" font-size="12.5" fill="#ff2020" textLength="18.6" lengthAdjust="spacingAndGlyphs">8 ft</text>
<text x="725.0" y="1282.5" font-size="12.5" fill="#ff2020" textLength="26.0" lengthAdjust="spacingAndGlyphs">11 ft</text>
<text x="914.0" y="1282.5" font-size="12.5" fill="#ff2020" textLength="25.8" lengthAdjust="spacingAndGlyphs">14 ft</text>
<text x="1103.0" y="1282.5" font-size="12.5" fill="#ff2020" textLength="25.9" lengthAdjust="spacingAndGlyphs">17 ft</text>
<text x="1291.5" y="1282.5" font-size="12.5" fill="#ff2020" textLength="26.4" lengthAdjust="spacingAndGlyphs">20 ft</text>
<text x="1480.5" y="1282.5" font-size="12.5" fill="#ff2020" textLength="26.8" lengthAdjust="spacingAndGlyphs">23 ft</text>
<text x="1649.2" y="1277.0" font-size="14" fill="#2a2a2a" textLength="31.8" lengthAdjust="spacingAndGlyphs">L (in)</text>
<text x="667.0" y="106.2" font-size="17" fill="#222" textLength="553.0" lengthAdjust="spacingAndGlyphs">Envelope Curves NASPEC 2001 ASD Wall (kip/ft)-L(in) - 8ZS2.5x075</text>
<text x="645.5" y="124.5" font-size="13.8" fill="#1c1cc4" textLength="597.5" lengthAdjust="spacingAndGlyphs">4 Span - Loads: Uplift - Lap= 8%L - Spacing= 1 ft - Top flange fastened - No Bracings</text>
<text x="736.0" y="142.5" font-size="13.8" fill="#1c1cc4" textLength="415.0" lengthAdjust="spacingAndGlyphs">Web Stiffeners Not Considered - Web Holes Not Considered</text>
<text x="829.5" y="160.5" font-size="13.8" fill="#1c1cc4" textLength="228.5" lengthAdjust="spacingAndGlyphs">Max. Deflec.= L/240 - Cb= 1,685</text>
<text x="1442.6" y="98.0" font-size="13.5" fill="#222" textLength="51.4" lengthAdjust="spacingAndGlyphs">License:</text>
<text x="1442.6" y="127.4" font-size="13.5" fill="#222" textLength="175.0" lengthAdjust="spacingAndGlyphs">PROFESSIONAL VERSION</text>
<text x="1442.6" y="163.5" font-size="14" fill="#1c1cc4" textLength="172.1" lengthAdjust="spacingAndGlyphs">Self-Weight= 3,59 lbf/ft2</text>
<path d="M443.6 191.5 H527.2" stroke="#1e1e1e" stroke-width="1.9" fill="none"/>
<path d="M516 160.2 H492.2 V233.4 H472" stroke="#0000ff" stroke-width="4.5" fill="none" stroke-linejoin="miter"/>
<path d="M514.5 159.8 L522 165.6 M473.5 233.8 L463.8 227.2" stroke="#0000ff" stroke-width="3.4" fill="none" stroke-linecap="round"/>
<path d="M492.2 131 V141" stroke="#ff0000" stroke-width="4.1" fill="none"/><path d="M485.1 140.2 H499.1 L492.2 147.7 Z" fill="#ff0000"/>
<text x="530.5" y="200.0" font-size="14.2" fill="#222" textLength="7.8" lengthAdjust="spacingAndGlyphs">x</text>
<path d="M888 173.6 H1188.4 M888 193 H1188.4 M888.00 193 V173.6 M883.40 182.6 H892.60 M903.02 193 V173.6 M898.42 182.6 H907.62 M918.04 193 V173.6 M913.44 182.6 H922.64 M933.06 193 V173.6 M928.46 182.6 H937.66 M948.08 193 V173.6 M943.48 182.6 H952.68 M963.10 193 V173.6 M958.50 182.6 H967.70 M978.12 193 V173.6 M973.52 182.6 H982.72 M993.14 193 V173.6 M988.54 182.6 H997.74 M1008.16 193 V173.6 M1003.56 182.6 H1012.76 M1023.18 193 V173.6 M1018.58 182.6 H1027.78 M1038.20 193 V173.6 M1033.60 182.6 H1042.80 M1053.22 193 V173.6 M1048.62 182.6 H1057.82 M1068.24 193 V173.6 M1063.64 182.6 H1072.84 M1083.26 193 V173.6 M1078.66 182.6 H1087.86 M1098.28 193 V173.6 M1093.68 182.6 H1102.88 M1113.30 193 V173.6 M1108.70 182.6 H1117.90 M1128.32 193 V173.6 M1123.72 182.6 H1132.92 M1143.34 193 V173.6 M1138.74 182.6 H1147.94 M1158.36 193 V173.6 M1153.76 182.6 H1162.96 M1173.38 193 V173.6 M1168.78 182.6 H1177.98 M1188.40 193 V173.6 M1183.80 182.6 H1193.00" fill="none" stroke="#ff1414" stroke-width="1.8"/>
<path d="M885.10 181.8 L888.00 177.4 L890.90 181.8 M900.12 181.8 L903.02 177.4 L905.92 181.8 M915.14 181.8 L918.04 177.4 L920.94 181.8 M930.16 181.8 L933.06 177.4 L935.96 181.8 M945.18 181.8 L948.08 177.4 L950.98 181.8 M960.20 181.8 L963.10 177.4 L966.00 181.8 M975.22 181.8 L978.12 177.4 L981.02 181.8 M990.24 181.8 L993.14 177.4 L996.04 181.8 M1005.26 181.8 L1008.16 177.4 L1011.06 181.8 M1020.28 181.8 L1023.18 177.4 L1026.08 181.8 M1035.30 181.8 L1038.20 177.4 L1041.10 181.8 M1050.32 181.8 L1053.22 177.4 L1056.12 181.8 M1065.34 181.8 L1068.24 177.4 L1071.14 181.8 M1080.36 181.8 L1083.26 177.4 L1086.16 181.8 M1095.38 181.8 L1098.28 177.4 L1101.18 181.8 M1110.40 181.8 L1113.30 177.4 L1116.20 181.8 M1125.42 181.8 L1128.32 177.4 L1131.22 181.8 M1140.44 181.8 L1143.34 177.4 L1146.24 181.8 M1155.46 181.8 L1158.36 177.4 L1161.26 181.8 M1170.48 181.8 L1173.38 177.4 L1176.28 181.8 M1185.50 181.8 L1188.40 177.4 L1191.30 181.8" fill="none" stroke="#ff1414" stroke-width="1.5" stroke-linejoin="round"/>
<path d="M888.00 174 V179 M903.02 174 V179 M918.04 174 V179 M933.06 174 V179 M948.08 174 V179 M963.10 174 V179 M978.12 174 V179 M993.14 174 V179 M1008.16 174 V179 M1023.18 174 V179 M1038.20 174 V179 M1053.22 174 V179 M1068.24 174 V179 M1083.26 174 V179 M1098.28 174 V179 M1113.30 174 V179 M1128.32 174 V179 M1143.34 174 V179 M1158.36 174 V179 M1173.38 174 V179 M1188.40 174 V179" fill="none" stroke="#ff1414" stroke-width="3"/>
<path d="M944.4 198.5 H1058 M1095 198.5 H1190.4 M887.4 203.1 H983.3 M1019.3 203.1 H1133.2" stroke="#0000ff" stroke-width="3.2" fill="none"/>
<path d="M888.0 205.3 L893.4 212.6 H882.6 Z M881.1 212.6 H894.9 M963.1 205.3 L968.5 212.6 H957.7 Z M956.2 212.6 H970.0 M1038.2 205.3 L1043.6 212.6 H1032.8 Z M1031.3 212.6 H1045.1 M1113.3 205.3 L1118.7 212.6 H1107.9 Z M1106.4 212.6 H1120.2 M1188.4 205.3 L1193.8 212.6 H1183.0 Z M1181.5 212.6 H1195.3" fill="none" stroke="#10e010" stroke-width="1.5"/>
<path d="M881.2 229.1 H1195 M888.0 216.5 V235.9 M963.1 216.5 V235.9 M1038.2 216.5 V235.9 M1113.3 216.5 V235.9 M1188.4 216.5 V235.9" fill="none" stroke="#1e1e1e" stroke-width="1.9"/>
<path d="M883.0 234.4 L893.5 224.1 M958.1 234.4 L968.6 224.1 M1033.2 234.4 L1043.7 224.1 M1108.3 234.4 L1118.8 224.1 M1183.4 234.4 L1193.9 224.1" fill="none" stroke="#1e1e1e" stroke-width="1.1"/>
<text x="924.9" y="225.4" font-size="14.6" fill="#333" textLength="7.4" lengthAdjust="spacingAndGlyphs">L</text>
<text x="1000.1" y="225.4" font-size="14.6" fill="#333" textLength="7.4" lengthAdjust="spacingAndGlyphs">L</text>
<text x="1075.2" y="225.4" font-size="14.6" fill="#333" textLength="7.4" lengthAdjust="spacingAndGlyphs">L</text>
<text x="1150.2" y="225.4" font-size="14.6" fill="#333" textLength="7.4" lengthAdjust="spacingAndGlyphs">L</text>
<rect x="1217.7" y="173.6" width="455.8" height="103.8" fill="#fff" stroke="#2020ff" stroke-width="1.9"/>
<text x="1233.0" y="190.6" font-size="16" fill="#1a1aee" textLength="84.6" lengthAdjust="spacingAndGlyphs">References</text>
<path d="M1233.0 193.0 H1317.6" stroke="#1a1aee" stroke-width="1.3" fill="none"/>
<text x="1442.6" y="190.6" font-size="16" fill="#1a1aee" textLength="195.0" lengthAdjust="spacingAndGlyphs">L= 204 in - Wr= 0,400 kip/ft</text>
<path d="M1442.6 193.0 H1637.6" stroke="#1a1aee" stroke-width="1.3" fill="none"/>
<path d="M1232.4 209.8 H1295.6" stroke="#404040" stroke-width="7.6"/>
<path d="M1232.4 232.4 H1295.6" stroke="#c00080" stroke-width="7.6"/>
<path d="M1232.4 254.8 H1295.6" stroke="#008000" stroke-width="7.6"/>
<text x="1308.0" y="214.7" font-size="13.3" fill="#4a4a4a" textLength="291.4" lengthAdjust="spacingAndGlyphs">Construction Load Capacity (Equiv.)=0.22 kips</text>
<text x="1308.0" y="237.0" font-size="13.3" fill="#c8108a" textLength="178.0" lengthAdjust="spacingAndGlyphs">Envelope Fy=55/Fya=55 ksi</text>
<text x="1308.0" y="259.7" font-size="13.3" fill="#10881a" textLength="178.0" lengthAdjust="spacingAndGlyphs">Envelope Fy=33/Fya=33 ksi</text>
<text x="1582.4" y="237.0" font-size="15.7" fill="#2a8c28" textLength="72.9" lengthAdjust="spacingAndGlyphs">W1=0,193</text>
<text x="1582.4" y="259.7" font-size="15.7" fill="#2a8c28" textLength="72.9" lengthAdjust="spacingAndGlyphs">W2=0,130</text>
<rect x="1148.6" y="296.2" width="525" height="65.8" fill="#fff" stroke="#c00080" stroke-width="1.5"/>
<text x="1163.5" y="313.5" font-size="13.5" fill="#c00080" textLength="504.0" lengthAdjust="spacingAndGlyphs">For spans &lt; 116in - Lap joints at support are not economically advisable</text>
<text x="1163.5" y="334.7" font-size="13.5" fill="#c00080" textLength="299.5" lengthAdjust="spacingAndGlyphs">The following conditions must be satisfied:</text>
<path d="M1163.5 337.1 H1463.0" stroke="#c00080" stroke-width="1.3" fill="none"/>
<text x="1163.5" y="355.5" font-size="13.5" fill="#c00080" textLength="462.1" lengthAdjust="spacingAndGlyphs">For spans &gt; 126in - Tension flange must be fastened (AISI C3.1.3)</text>
<rect x="1148.6" y="385.2" width="525" height="66.4" fill="#fff" stroke="#008000" stroke-width="1.5"/>
<text x="1163.5" y="401.4" font-size="13.5" fill="#008000" textLength="504.0" lengthAdjust="spacingAndGlyphs">For spans &lt; 116in - Lap joints at support are not economically advisable</text>
<text x="1163.5" y="422.5" font-size="13.5" fill="#008000" textLength="299.5" lengthAdjust="spacingAndGlyphs">The following conditions must be satisfied:</text>
<path d="M1163.5 424.9 H1463.0" stroke="#008000" stroke-width="1.3" fill="none"/>
<text x="1163.5" y="443.3" font-size="13.5" fill="#008000" textLength="462.1" lengthAdjust="spacingAndGlyphs">For spans &gt; 150in - Tension flange must be fastened (AISI C3.1.3)</text>
</svg>
</div>
</body></html>
